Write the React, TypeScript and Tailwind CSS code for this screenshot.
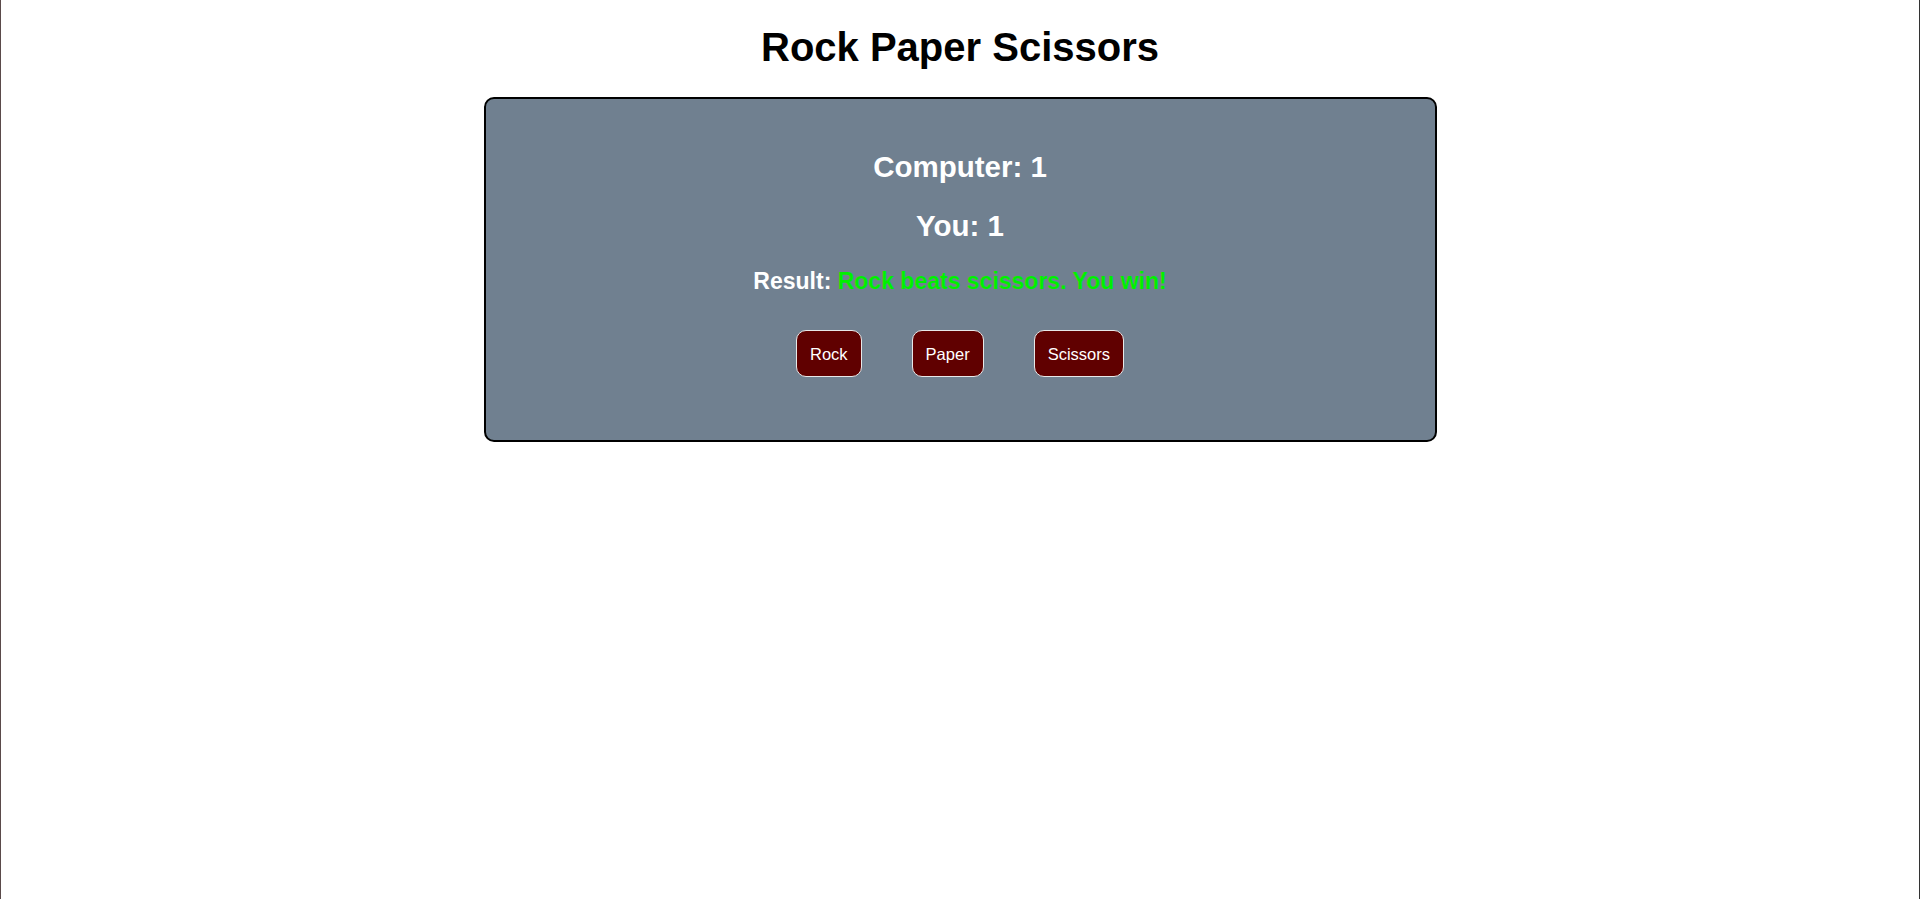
import { useState } from 'react';

type Choice = 'Rock' | 'Paper' | 'Scissors';

const choices: Choice[] = ['Rock', 'Paper', 'Scissors'];

export default function App() {
  const [computer] = useState(1);
  const [you] = useState(1);
  const [result] = useState('Rock beats scissors. You win!');

  const handlePick = (choice: Choice) => {
    console.log('Picked:', choice);
  };

  return (
    <div className="min-h-[899px] bg-white border-l border-l-[#5a4a4a] border-r border-r-[#333333] font-['Liberation_Sans',Arial,sans-serif]">
      {/* Title */}
      <h1 className="pt-[24px] mb-[27px] text-center text-[40px] leading-[46px] font-bold text-black">
        Rock Paper Scissors
      </h1>

      {/* Game card */}
      <div className="w-[953px] mx-auto bg-[#708090] border-2 border-black rounded-[10px] flex flex-col items-center pt-[51px] pb-[63px]">
        <h2 className="text-[29.5px] leading-[33px] font-bold text-white">Computer: {computer}</h2>
        <h2 className="mt-[26px] text-[29.5px] leading-[33px] font-bold text-white">You: {you}</h2>
        <p className="mt-[26px] text-[23px] leading-[26px] font-bold text-white">
          Result: <span className="text-[#00f000]">{result}</span>
        </p>

        <div className="mt-[36px] flex gap-[50px]">
          {choices.map((c) => (
            <button
              key={c}
              onClick={() => handlePick(c)}
              className="h-[47px] px-[13px] bg-[#600000] border border-[#e8e8e8] rounded-[10px] text-white text-[16.5px] leading-[18px]"
            >
              {c}
            </button>
          ))}
        </div>
      </div>
    </div>
  );
}
